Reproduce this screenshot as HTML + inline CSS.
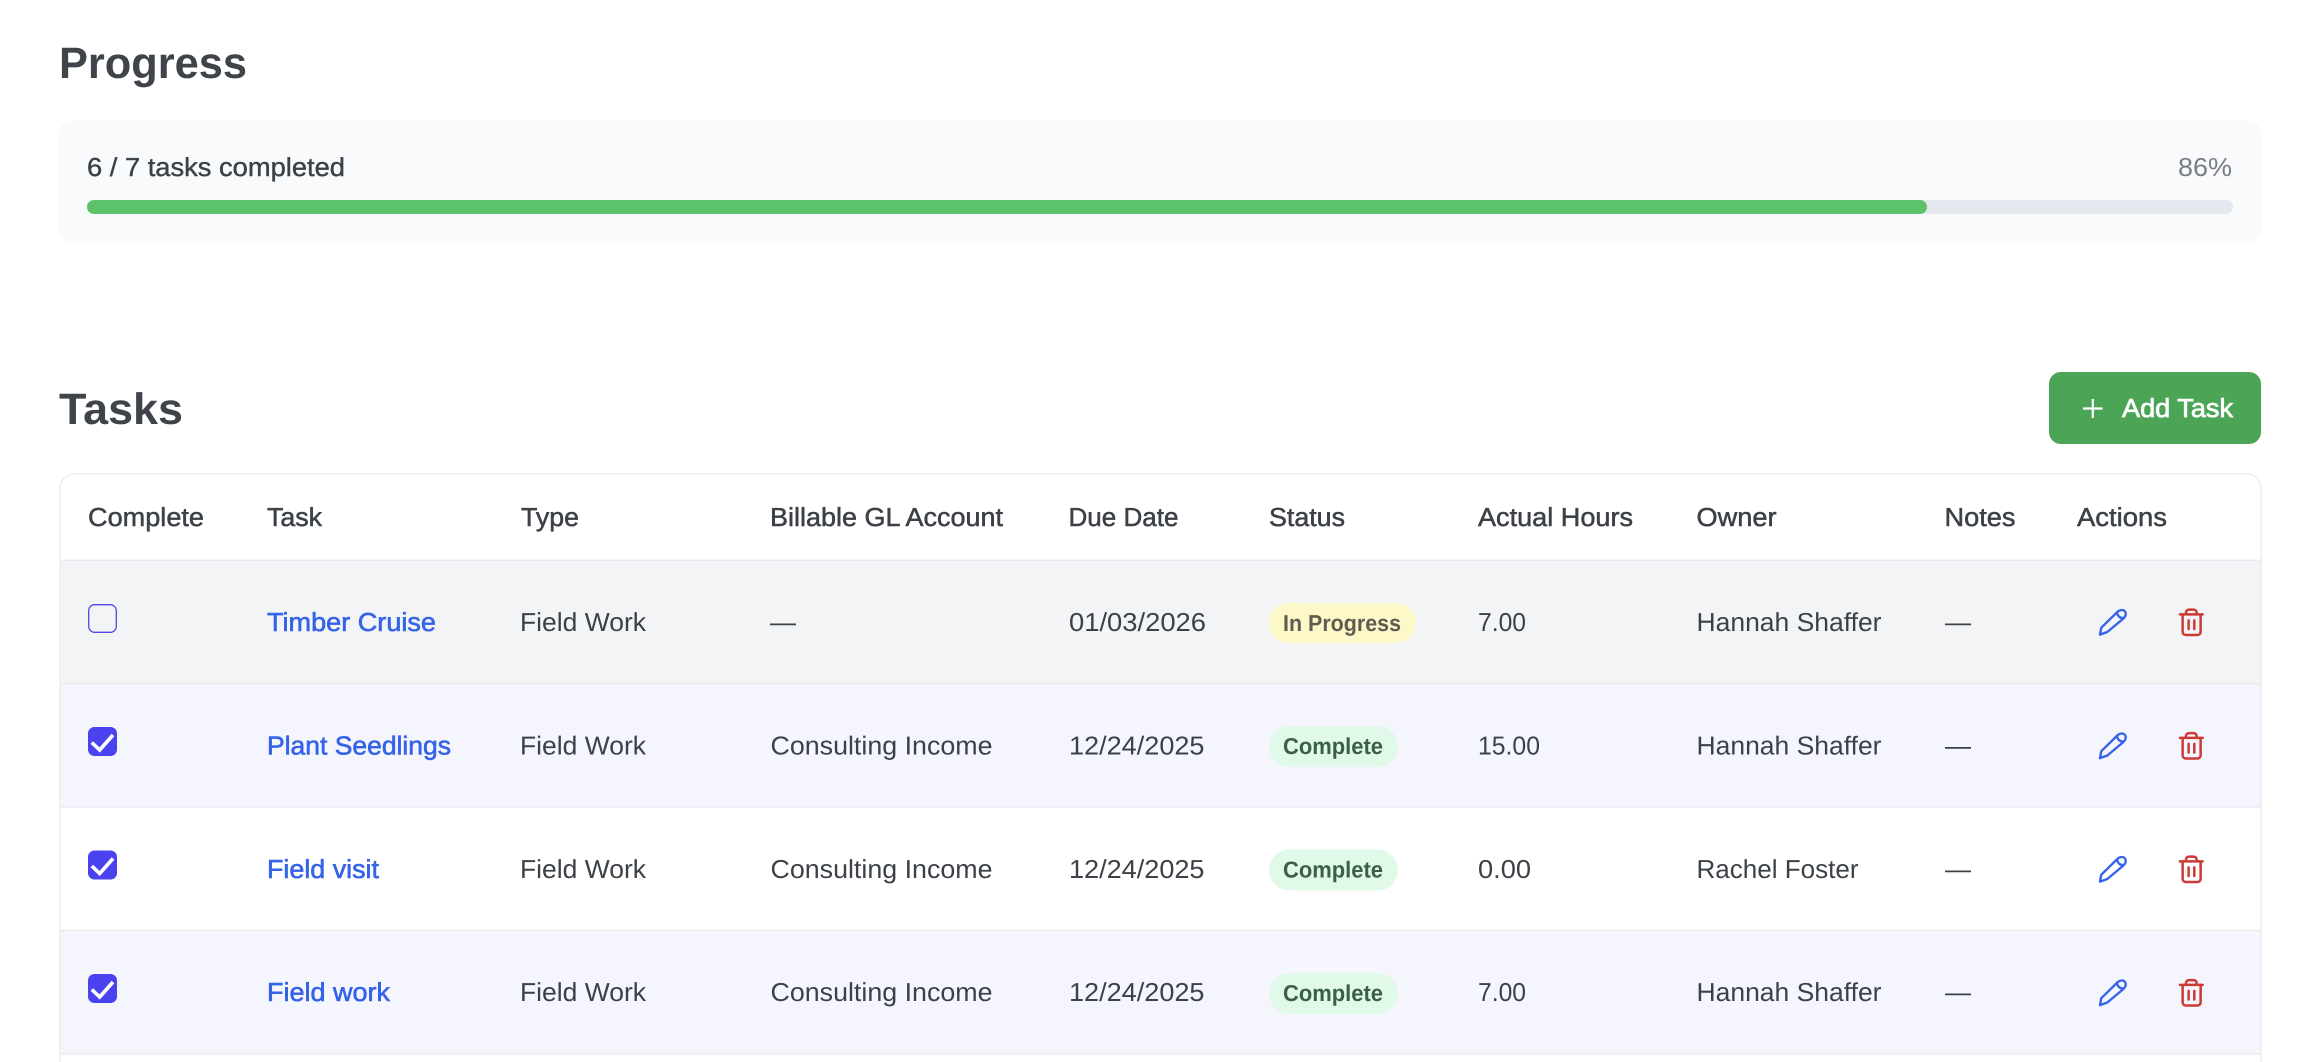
<!DOCTYPE html>
<html lang="en">
<head>
<meta charset="utf-8">
<title>Tasks</title>
<style>
html,body{margin:0;padding:0;background:#fff;width:2308px;height:1062px;overflow:hidden}
svg{display:block}
text{font-family:"Liberation Sans",sans-serif;font-size:26px;fill:#3c4147;text-rendering:geometricPrecision}
.h{font-size:44px;font-weight:700;fill:#3f444b}
.th{stroke:#3c4147;stroke-width:.5;font-size:26px}
.l{fill:#3563e9;stroke:#3563e9;stroke-width:.6}
.bp{font-size:23px;font-weight:700;fill:#635a52}
.bc{font-size:23px;font-weight:700;fill:#3b5f4a}
.pen{fill:none;stroke:#3563e9;stroke-width:7;stroke-linecap:round;stroke-linejoin:round}
.tr{fill:none;stroke:#cc3a36;stroke-width:7.5;stroke-linecap:round;stroke-linejoin:round}
</style>
</head>
<body>
<svg width="2308" height="1062" viewBox="0 0 2308 1062" xmlns="http://www.w3.org/2000/svg">
<defs>
<clipPath id="tb"><path d="M74 474H2247a14 14 0 0 1 14 14V1100H60V488a14 14 0 0 1 14-14Z"/></clipPath>
</defs>

<text class="h" x="59" y="78" textLength="188" lengthAdjust="spacingAndGlyphs">Progress</text>

<rect x="59" y="120" width="2202" height="123" rx="14" fill="#f9fafc"/>
<text x="87" y="176" stroke="#3c4147" stroke-width=".4" textLength="258" lengthAdjust="spacingAndGlyphs">6 / 7 tasks completed</text>
<text x="2178" y="176" style="fill:#7a7e84" textLength="54" lengthAdjust="spacingAndGlyphs">86%</text>
<rect x="87" y="200" width="2146" height="14" rx="7" fill="#e3e8ef"/>
<rect x="87" y="200" width="1840" height="14" rx="7" fill="#5cc36b"/>

<text class="h" x="59" y="424" textLength="124" lengthAdjust="spacingAndGlyphs">Tasks</text>
<rect x="2049" y="372" width="212" height="72" rx="12" fill="#4ca456"/>
<path d="M2083 408.5H2102.5M2092.8 399V418" stroke="#fff" stroke-width="2.2" fill="none"/>
<text x="2122" y="417" style="fill:#fff" stroke="#fff" stroke-width=".7" textLength="111" lengthAdjust="spacingAndGlyphs">Add Task</text>

<g clip-path="url(#tb)">
<rect x="60" y="474" width="2201" height="86" fill="#fff"/>
<rect x="60" y="560" width="2201" height="123.5" fill="#f3f4f6"/>
<rect x="60" y="683.5" width="2201" height="123.5" fill="#f5f6fd"/>
<rect x="60" y="807" width="2201" height="123.5" fill="#fff"/>
<rect x="60" y="930.5" width="2201" height="123.5" fill="#f5f6fd"/>
<rect x="60" y="1054" width="2201" height="20" fill="#fff"/>
<g fill="#e8eaf0">
<rect x="60" y="559.6" width="2201" height="1.4"/>
<rect x="60" y="682.8" width="2201" height="1.4"/>
<rect x="60" y="806.3" width="2201" height="1.4"/>
<rect x="60" y="929.8" width="2201" height="1.4"/>
<rect x="60" y="1053.3" width="2201" height="1.4"/>
</g>
</g>
<path d="M60 1070V488a14 14 0 0 1 14-14H2247a14 14 0 0 1 14 14V1070" fill="none" stroke="#e8eaf0" stroke-width="1.3"/>

<!-- header -->
<text class="th" x="88" y="526" textLength="116" lengthAdjust="spacingAndGlyphs">Complete</text>
<text class="th" x="267" y="526" textLength="55" lengthAdjust="spacingAndGlyphs">Task</text>
<text class="th" x="521" y="526" textLength="58" lengthAdjust="spacingAndGlyphs">Type</text>
<text class="th" x="770" y="526" textLength="233" lengthAdjust="spacingAndGlyphs">Billable GL Account</text>
<text class="th" x="1068.5" y="526" textLength="110" lengthAdjust="spacingAndGlyphs">Due Date</text>
<text class="th" x="1269" y="526" textLength="76" lengthAdjust="spacingAndGlyphs">Status</text>
<text class="th" x="1478" y="526" textLength="155" lengthAdjust="spacingAndGlyphs">Actual Hours</text>
<text class="th" x="1696.5" y="526" textLength="80" lengthAdjust="spacingAndGlyphs">Owner</text>
<text class="th" x="1944.5" y="526" textLength="71" lengthAdjust="spacingAndGlyphs">Notes</text>
<text class="th" x="2077" y="526" textLength="90" lengthAdjust="spacingAndGlyphs">Actions</text>

<!-- row 1 -->
<rect x="88.7" y="604.7" width="27.6" height="27.6" rx="6" fill="none" stroke="#4f46e5" stroke-width="1.3"/>
<text class="l" x="267" y="631" textLength="169" lengthAdjust="spacingAndGlyphs">Timber Cruise</text>
<text x="520" y="631" textLength="126" lengthAdjust="spacingAndGlyphs">Field Work</text>
<text x="770" y="631" textLength="26" lengthAdjust="spacingAndGlyphs">—</text>
<text x="1069" y="631" textLength="137" lengthAdjust="spacingAndGlyphs">01/03/2026</text>
<rect x="1269" y="603" width="147" height="40" rx="20" fill="#fdf8c8"/>
<text class="bp" x="1283" y="631" textLength="118" lengthAdjust="spacingAndGlyphs">In Progress</text>
<text x="1478" y="631" textLength="48" lengthAdjust="spacingAndGlyphs">7.00</text>
<text x="1696.5" y="631" textLength="185" lengthAdjust="spacingAndGlyphs">Hannah Shaffer</text>
<text x="1945" y="631" textLength="26" lengthAdjust="spacingAndGlyphs">—</text>
<g transform="translate(1900 460) scale(.3333)">
<path class="pen" d="M600 524L604 503L652 456C660 448 672 448 676 456C680 464 676 470 670 476L622 516ZM651 458C653 468 660 475 671 474"/>
<path class="tr" d="M840 463H908M858 463V458C858 452 862 449 868 449H880C886 449 890 452 890 458V463M848 464V515C848 521 852 525 858 525H892C898 525 902 521 902 515V464M866 481V507M883 481V507"/>
</g>

<!-- row 2 -->
<rect x="88" y="727" width="29" height="29" rx="6.5" fill="#4a42ef"/>
<path d="M91.8 742.5L99.7 750L113 735" fill="none" stroke="#fff" stroke-width="3.6"/>
<text class="l" x="267" y="754.5" textLength="184" lengthAdjust="spacingAndGlyphs">Plant Seedlings</text>
<text x="520" y="754.5" textLength="126" lengthAdjust="spacingAndGlyphs">Field Work</text>
<text x="770.5" y="754.5" textLength="222" lengthAdjust="spacingAndGlyphs">Consulting Income</text>
<text x="1069" y="754.5" textLength="135.5" lengthAdjust="spacingAndGlyphs">12/24/2025</text>
<rect x="1269" y="726" width="129" height="41" rx="20.5" fill="#e0f9e9"/>
<text class="bc" x="1283" y="754" textLength="100" lengthAdjust="spacingAndGlyphs">Complete</text>
<text x="1478" y="754.5" textLength="62" lengthAdjust="spacingAndGlyphs">15.00</text>
<text x="1696.5" y="754.5" textLength="185" lengthAdjust="spacingAndGlyphs">Hannah Shaffer</text>
<text x="1945" y="754.5" textLength="26" lengthAdjust="spacingAndGlyphs">—</text>
<g transform="translate(1900 583.5) scale(.3333)">
<path class="pen" d="M600 524L604 503L652 456C660 448 672 448 676 456C680 464 676 470 670 476L622 516ZM651 458C653 468 660 475 671 474"/>
<path class="tr" d="M840 463H908M858 463V458C858 452 862 449 868 449H880C886 449 890 452 890 458V463M848 464V515C848 521 852 525 858 525H892C898 525 902 521 902 515V464M866 481V507M883 481V507"/>
</g>

<!-- row 3 -->
<rect x="88" y="850.5" width="29" height="29" rx="6.5" fill="#4a42ef"/>
<path d="M91.8 866L99.7 873.5L113 858.5" fill="none" stroke="#fff" stroke-width="3.6"/>
<text class="l" x="267" y="878" textLength="112" lengthAdjust="spacingAndGlyphs">Field visit</text>
<text x="520" y="878" textLength="126" lengthAdjust="spacingAndGlyphs">Field Work</text>
<text x="770.5" y="878" textLength="222" lengthAdjust="spacingAndGlyphs">Consulting Income</text>
<text x="1069" y="878" textLength="135.5" lengthAdjust="spacingAndGlyphs">12/24/2025</text>
<rect x="1269" y="849.5" width="129" height="41" rx="20.5" fill="#e0f9e9"/>
<text class="bc" x="1283" y="877.5" textLength="100" lengthAdjust="spacingAndGlyphs">Complete</text>
<text x="1478" y="878" textLength="53" lengthAdjust="spacingAndGlyphs">0.00</text>
<text x="1696.5" y="878" textLength="162" lengthAdjust="spacingAndGlyphs">Rachel Foster</text>
<text x="1945" y="878" textLength="26" lengthAdjust="spacingAndGlyphs">—</text>
<g transform="translate(1900 707) scale(.3333)">
<path class="pen" d="M600 524L604 503L652 456C660 448 672 448 676 456C680 464 676 470 670 476L622 516ZM651 458C653 468 660 475 671 474"/>
<path class="tr" d="M840 463H908M858 463V458C858 452 862 449 868 449H880C886 449 890 452 890 458V463M848 464V515C848 521 852 525 858 525H892C898 525 902 521 902 515V464M866 481V507M883 481V507"/>
</g>

<!-- row 4 -->
<rect x="88" y="974" width="29" height="29" rx="6.5" fill="#4a42ef"/>
<path d="M91.8 989.5L99.7 997L113 982" fill="none" stroke="#fff" stroke-width="3.6"/>
<text class="l" x="267" y="1001" textLength="123" lengthAdjust="spacingAndGlyphs">Field work</text>
<text x="520" y="1001" textLength="126" lengthAdjust="spacingAndGlyphs">Field Work</text>
<text x="770.5" y="1001" textLength="222" lengthAdjust="spacingAndGlyphs">Consulting Income</text>
<text x="1069" y="1001" textLength="135.5" lengthAdjust="spacingAndGlyphs">12/24/2025</text>
<rect x="1269" y="973" width="129" height="41" rx="20.5" fill="#e0f9e9"/>
<text class="bc" x="1283" y="1001" textLength="100" lengthAdjust="spacingAndGlyphs">Complete</text>
<text x="1478" y="1001" textLength="48" lengthAdjust="spacingAndGlyphs">7.00</text>
<text x="1696.5" y="1001" textLength="185" lengthAdjust="spacingAndGlyphs">Hannah Shaffer</text>
<text x="1945" y="1001" textLength="26" lengthAdjust="spacingAndGlyphs">—</text>
<g transform="translate(1900 830.5) scale(.3333)">
<path class="pen" d="M600 524L604 503L652 456C660 448 672 448 676 456C680 464 676 470 670 476L622 516ZM651 458C653 468 660 475 671 474"/>
<path class="tr" d="M840 463H908M858 463V458C858 452 862 449 868 449H880C886 449 890 452 890 458V463M848 464V515C848 521 852 525 858 525H892C898 525 902 521 902 515V464M866 481V507M883 481V507"/>
</g>
</svg>
</body>
</html>
